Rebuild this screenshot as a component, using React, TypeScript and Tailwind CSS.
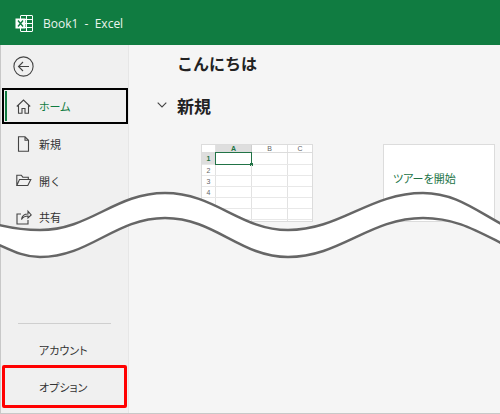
const jp = "font-['Noto_Sans_CJK_JP','Noto_Sans',sans-serif]";
const palt = "[font-feature-settings:'palt']";

function NavItem({ icon, label }: { icon: React.ReactNode; label: string }) {
  return (
    <div className="flex h-[36.5px] items-center pl-[15px]">
      <span className="flex w-[23px] justify-start">{icon}</span>
      <span className="text-[11px] text-[#333]">{label}</span>
    </div>
  );
}

const stroke = { fill: "none", stroke: "#444", strokeWidth: 1.1 };

function SheetCard() {
  const rows = ["1", "2", "3", "4", "", "", ""];
  return (
    <div className="h-[78px] w-[112px] overflow-hidden border border-[#dcdcdc] bg-white font-['Liberation_Sans',sans-serif] text-[7px] text-[#666]">
      <div className="flex h-[8px] border-b border-[#dcdcdc] leading-[7px]">
        <div className="w-[14px] border-r border-[#e2e2e2]" />
        <div className="w-[36px] border-r border-[#cfcfcf] bg-[#dedede] text-center font-bold text-[#217346]">A</div>
        <div className="w-[36px] border-r border-[#e2e2e2] text-center">B</div>
        <div className="flex-1 text-center">C</div>
      </div>
      {rows.map((r, i) => (
        <div key={i} className={`flex border-b border-[#e8e8e8] leading-[11px] ${i === 0 ? "h-[12px]" : "h-[11px]"}`}>
          <div className={`w-[14px] border-r border-[#e2e2e2] text-center ${i === 0 ? "bg-[#dedede] font-bold text-[#217346]" : ""}`}>{r}</div>
          <div className="relative w-[36px] border-r border-[#e2e2e2]">
            {i === 0 && (
              <div className="absolute -top-px -left-px h-[13px] w-[37px] border border-[#217346]">
                <div className="absolute -right-[2px] -bottom-[2px] h-[3px] w-[3px] bg-[#217346]" />
              </div>
            )}
          </div>
          <div className="w-[36px] border-r border-[#e2e2e2]" />
          <div className="flex-1" />
        </div>
      ))}
    </div>
  );
}

export default function App() {
  return (
    <div className={`relative flex h-[414px] w-[500px] flex-col overflow-hidden bg-[#f5f5f5] ${jp}`}>
      <header className="flex h-[45px] shrink-0 items-center bg-[#107c41] pt-[2px] pl-[15px] text-white">
        <svg width="18" height="17" viewBox="0 0 18 17" className="mr-[10px]">
          <rect x="5.5" y="0.5" width="12" height="16" rx="0.5" fill="none" stroke="#fff" />
          <path d="M11.5 1v15M6 4.5h11.5M6 8.500h11.5M6 12.500h11.500" stroke="#fff" strokeWidth="1" fill="none" />
          <rect x="0.500" y="3.500" width="10" height="10" fill="#fff" />
          <path d="M3 5.500l5 6M8 5.500l-5 6" stroke="#107c41" strokeWidth="1.400" fill="none" />
        </svg>
        <span className="font-['Open_Sans',sans-serif] text-[12px] whitespace-pre text-[#eaf4ee]">Book1  -  Excel</span>
      </header>

      <div className="flex min-h-0 flex-1 border-b border-l border-[#c8c8c8]">
        <aside className="flex w-[128px] shrink-0 flex-col border-r border-[#e6e6e6] bg-[#f0f0f0]">
          <div className="flex h-[43px] shrink-0 items-center pl-[12px]">
            <svg width="21" height="21" viewBox="0 0 21 21">
              <circle cx="10.500" cy="10.500" r="9.600" fill="none" stroke="#444" strokeWidth="1.100" />
              <path d="M16 10.500H5.500M10 6l-4.500 4.500L10 15" fill="none" stroke="#444" strokeWidth="1.100" />
            </svg>
          </div>
          <div className="relative ml-px flex h-[36px] shrink-0 items-center border-2 border-black pl-[12px]">
            <div className="absolute top-px left-px h-[30px] w-[2px] bg-[#107c41]" />
            <span className="flex w-[23px]">
              <svg width="15" height="15" viewBox="0 0 15 15">
                <path d="M0.800 7.500L7.500 1l6.700 6.500M2.500 6.500v7.700h3.500V9.500h3v4.700h3.500V6.500" {...stroke} />
              </svg>
            </span>
            <span className={`text-[11px] text-[#107c41] ${palt}`}>ホーム</span>
          </div>
          <div className="mt-[2px] shrink-0">
            <NavItem label="新規" icon={<svg width="15" height="16" viewBox="0 0 15 16"><path d="M2.500 0.800h6.500l3.500 3.500v10.900h-10zM9 0.800v3.500h3.500" {...stroke} /></svg>} />
            <NavItem label="開く" icon={<svg width="16" height="13" viewBox="0 0 16 13"><path d="M0.800 11.500V1.200h4.500l1.500 2h5.500v2.300M0.800 11.500h11l3-6H3.500z" {...stroke} /></svg>} />
            <NavItem label="共有" icon={<svg width="16" height="16" viewBox="0 0 16 16"><path d="M5 5H1v10h11v-4M5.500 10.500c.5-3.500 3-5.500 6.500-5.500V2.200L15.200 6 12 9V7c-2.500 0-5 1-6.500 3.500z" {...stroke} /></svg>} />
          </div>
          <div className="mt-auto mb-[5px] flex shrink-0 flex-col">
            <div className="mx-[17px] h-px bg-[#cfcfcf]" />
            <div className={`mt-[7px] flex h-[36px] items-center pt-[2px] pl-[38px] text-[11px] text-[#333] ${palt}`}>アカウント</div>
            <div className={`mt-[-2px] ml-[1px] flex h-[43px] w-[125px] items-center rounded-[2px] border-[3px] border-[#ff0000] pt-[2px] pl-[34px] text-[11px] text-[#333] ${palt}`}>オプション</div>
          </div>
        </aside>

        <main className="min-w-0 flex-1 pl-[48px]">
          <h1 className="mt-[6px] h-[26px] text-[16px] leading-[24px] font-bold text-[#222]">こんにちは</h1>
          <div className="relative mt-[17px] h-[24px]">
            <svg width="10" height="6" viewBox="0 0 10 6" className="absolute top-[8px] -left-[20px]">
              <path d="M0.700 0.700L5 5l4.300-4.300" fill="none" stroke="#444" strokeWidth="1.100" />
            </svg>
            <h2 className="text-[17px] leading-[24px] font-bold text-[#222]">新規</h2>
          </div>
          <div className="mt-[26px] ml-[24px] flex gap-[70px]">
            <SheetCard />
            <div className={`h-[78px] w-[112px] border border-[#dcdcdc] bg-white pt-[25px] pl-[9px] text-[11px] leading-[16px] text-[#217346] ${palt}`}>ツアーを開始</div>
          </div>
        </main>
      </div>

      <svg width="500" height="414" viewBox="0 0 500 414" className="pointer-events-none absolute top-0 left-0">
        <path d="M-5 224C15 229 25 230 40 230C90 230 115 193 165 193C215 193 240 230 288 230C340 230 370 193 423 193C455 193 475 210 505 226L505 245C475 230 455 218 423 218C370 218 340 257 288 257C240 257 215 218 165 218C115 218 90 257 40 257C25 257 15 252 -5 243Z" fill="#fff" />
        <path d="M-5 224C15 229 25 230 40 230C90 230 115 193 165 193C215 193 240 230 288 230C340 230 370 193 423 193C455 193 475 210 505 226" fill="none" stroke="#666" strokeWidth="2.500" />
        <path d="M-5 243C15 252 25 257 40 257C90 257 115 218 165 218C215 218 240 257 288 257C340 257 370 218 423 218C455 218 475 230 505 245" fill="none" stroke="#666" strokeWidth="2.500" />
      </svg>
    </div>
  );
}
